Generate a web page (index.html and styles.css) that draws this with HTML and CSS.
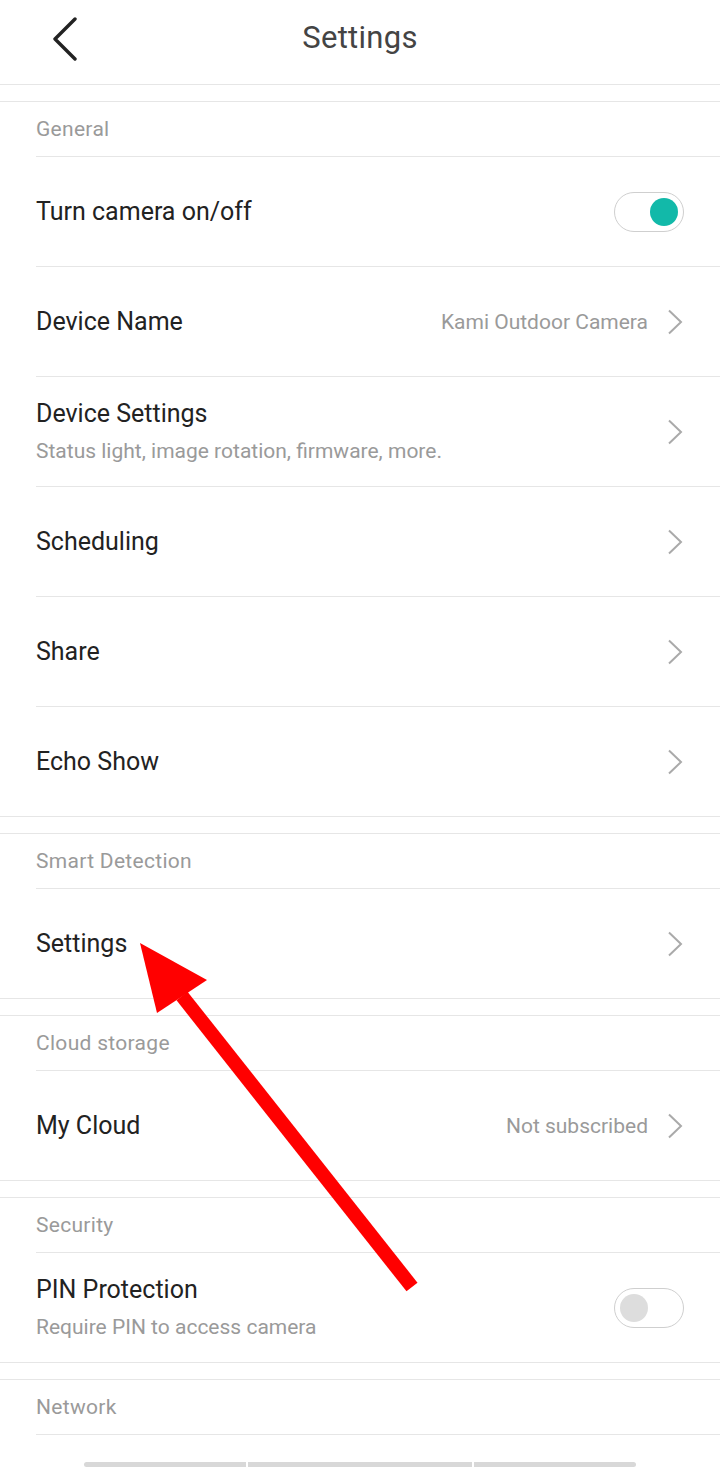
FILE: index.html
```html
<!DOCTYPE html>
<html lang="en">
<head>
  <meta charset="UTF-8" />
  <meta name="viewport" content="width=device-width, initial-scale=1.0"/>
  <title>Settings</title>
  <link rel="stylesheet" href="styles.css">
</head>
<body>

<header class="topbar">
  <svg class="back" width="40" height="48" viewBox="0 0 40 48">
    <path d="M30 6 L10 26 L30 46" fill="none" stroke="#222" stroke-width="3.4" stroke-linecap="round" stroke-linejoin="round"/>
  </svg>
  <h1>Settings</h1>
</header>

<section class="group">
  <div class="group-title">General</div>
  <div class="row">
    <div class="label">Turn camera on/off</div>
    <span class="toggle on"><span class="knob"></span></span>
  </div>
  <div class="row">
    <div class="label">Device Name</div>
    <span class="value">Kami Outdoor Camera</span>
    <svg class="chev" width="16" height="26" viewBox="0 0 16 26"><path d="M2 1.5 L14 13 L2 24.5" fill="none" stroke="#aaa" stroke-width="2"/></svg>
  </div>
  <div class="row">
    <div class="label">
      Device Settings
      <div class="sub">Status light, image rotation, firmware, more.</div>
    </div>
    <svg class="chev" width="16" height="26" viewBox="0 0 16 26"><path d="M2 1.5 L14 13 L2 24.5" fill="none" stroke="#aaa" stroke-width="2"/></svg>
  </div>
  <div class="row">
    <div class="label">Scheduling</div>
    <svg class="chev" width="16" height="26" viewBox="0 0 16 26"><path d="M2 1.5 L14 13 L2 24.5" fill="none" stroke="#aaa" stroke-width="2"/></svg>
  </div>
  <div class="row">
    <div class="label">Share</div>
    <svg class="chev" width="16" height="26" viewBox="0 0 16 26"><path d="M2 1.5 L14 13 L2 24.5" fill="none" stroke="#aaa" stroke-width="2"/></svg>
  </div>
  <div class="row">
    <div class="label">Echo Show</div>
    <svg class="chev" width="16" height="26" viewBox="0 0 16 26"><path d="M2 1.5 L14 13 L2 24.5" fill="none" stroke="#aaa" stroke-width="2"/></svg>
  </div>
</section>

<section class="group">
  <div class="group-title">Smart Detection</div>
  <div class="row">
    <div class="label">Settings</div>
    <svg class="chev" width="16" height="26" viewBox="0 0 16 26"><path d="M2 1.5 L14 13 L2 24.5" fill="none" stroke="#aaa" stroke-width="2"/></svg>
  </div>
</section>

<section class="group">
  <div class="group-title">Cloud storage</div>
  <div class="row">
    <div class="label">My Cloud</div>
    <span class="value">Not subscribed</span>
    <svg class="chev" width="16" height="26" viewBox="0 0 16 26"><path d="M2 1.5 L14 13 L2 24.5" fill="none" stroke="#aaa" stroke-width="2"/></svg>
  </div>
</section>

<section class="group">
  <div class="group-title">Security</div>
  <div class="row">
    <div class="label">
      PIN Protection
      <div class="sub">Require PIN to access camera</div>
    </div>
    <span class="toggle"><span class="knob"></span></span>
  </div>
</section>

<section class="group open">
  <div class="group-title">Network</div>
</section>

<div class="scrollbar">
  <span class="seg s1"></span>
  <span class="seg s2"></span>
  <span class="seg s3"></span>
</div>

<!-- flecha roja encima del contenido -->
<svg class="arrow" width="720" height="1468" viewBox="0 0 720 1468">
  <line x1="182" y1="996" x2="412" y2="1287" stroke="#ff0000" stroke-width="14"/>
  <polygon points="140,943 207,980 157,1013" fill="#ff0000"/>
</svg>

</body>
</html>
```

FILE: styles.css
```css
body {
  margin: 0;
  width: 720px;
  min-height: 1468px;
  position: relative;
  overflow: hidden;
  background: #fff;
  font-family: Roboto, "Liberation Sans", sans-serif;
  color: #222;
}

.topbar {
  height: 85px;
  box-sizing: border-box;
  padding-bottom: 10px;
  border-bottom: 1px solid #e6e6e6;
  position: relative;
  display: flex;
  align-items: center;
  justify-content: center;
}

.topbar .back {
  position: absolute;
  left: 45px;
  top: 13px;
}

.topbar h1 {
  margin: 0;
  font-size: 31px;
  font-weight: 400;
  color: #444;
  letter-spacing: 0.3px;
}

.group {
  margin-top: 16px;
  border-top: 1px solid #e6e6e6;
  border-bottom: 1px solid #e6e6e6;
  padding-left: 36px;
}

.group.open {
  border-bottom: none;
}

.group-title {
  height: 55px;
  box-sizing: border-box;
  border-bottom: 1px solid #e6e6e6;
  display: flex;
  align-items: center;
  font-size: 21px;
  letter-spacing: 0.3px;
  color: #9a9a9a;
}

.row {
  height: 110px;
  box-sizing: border-box;
  border-bottom: 1px solid #e6e6e6;
  display: flex;
  align-items: center;
  padding-right: 36px;
}

.row:last-child {
  height: 109px;
  border-bottom: none;
}

.label {
  flex: 1;
  font-size: 25px;
  line-height: 32px;
}

.sub {
  margin-top: 7px;
  font-size: 21px;
  line-height: 28px;
  color: #9a9a9a;
}

.value {
  font-size: 21px;
  color: #9a9a9a;
  margin-right: 19px;
}

.chev {
  display: block;
  margin-right: 1px;
}

.toggle {
  width: 70px;
  height: 40px;
  box-sizing: border-box;
  border: 1px solid #cfcfcf;
  border-radius: 20px;
  display: flex;
  align-items: center;
  padding: 0 5px;
}

.knob {
  width: 28px;
  height: 28px;
  border-radius: 50%;
  background: #dddddd;
}

.toggle.on {
  justify-content: flex-end;
}

.toggle.on .knob {
  background: #12b9a9;
}

.scrollbar {
  margin-top: 27px;
  margin-left: 84px;
  display: flex;
  gap: 2px;
}

.seg {
  height: 5px;
  background: #d8d8d8;
}

.s1 { width: 162px; border-radius: 3px 0 0 3px; }
.s2 { width: 224px; }
.s3 { width: 162px; border-radius: 0 3px 3px 0; }

.arrow {
  position: absolute;
  top: 0;
  left: 0;
  pointer-events: none;
}
```
